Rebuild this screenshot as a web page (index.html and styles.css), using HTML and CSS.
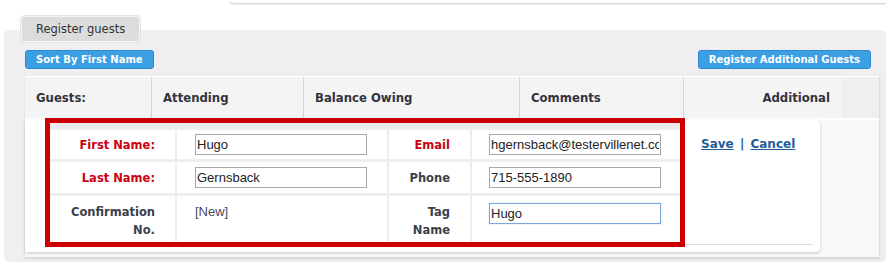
FILE: index.html
```html
<!DOCTYPE html>
<html>

<head>
    <meta name="viewport" content="width=device-width, initial-scale=1">
    <link rel="stylesheet" href="styles.css">
    <title>Register guests</title>
</head>

<body>
    <div class="top-card"></div>

    <div class="tab">Register guests</div>

    <div class="panel">
        <div class="toolbar">
            <button class="btn">Sort By First Name</button>
            <button class="btn">Register Additional Guests</button>
        </div>

        <div class="guest-grid">
            <div class="grid-head">
                <div class="col col-guests">Guests:</div>
                <div class="col col-attending">Attending</div>
                <div class="col col-balance">Balance Owing</div>
                <div class="col col-comments">Comments</div>
                <div class="col col-additional">Additional</div>
            </div>

            <div class="edit-card">
                <div class="edit-box">
                    <div class="form-grid">
                        <div class="lbl req">First Name:</div>
                        <div class="fld"><input class="txt" type="text" value="Hugo"></div>
                        <div class="lbl req">Email</div>
                        <div class="fld alt"><input class="txt" type="text" value="hgernsback@testervillenet.com"></div>

                        <div class="lbl req">Last Name:</div>
                        <div class="fld"><input class="txt" type="text" value="Gernsback"></div>
                        <div class="lbl">Phone</div>
                        <div class="fld alt"><input class="txt" type="text" value="715-555-1890"></div>

                        <div class="lbl top">Confirmation No.</div>
                        <div class="fld top"><span class="new-tag">[New]</span></div>
                        <div class="lbl top">Tag Name</div>
                        <div class="fld alt top"><input class="txt focused" type="text" value="Hugo"></div>
                    </div>
                </div>

                <div class="actions">
                    <a href="#">Save</a> <span class="sep">|</span> <a href="#">Cancel</a>
                </div>
            </div>
        </div>
    </div>
</body>

</html>
```

FILE: styles.css
```css
body {
    margin: 0;
    background: #ffffff;
    font-family: "DejaVu Sans", Verdana, sans-serif;
    color: #333333;
}

.top-card {
    margin-left: 229px;
    width: 657px;
    height: 3px;
    background: #ffffff;
    border-bottom: 1px solid #dadada;
    border-bottom-left-radius: 4px;
    box-shadow: 0 1px 1px rgba(0, 0, 0, 0.08);
}

.tab {
    position: relative;
    z-index: 1;
    width: fit-content;
    margin: 12px 0 -12px 21px;
    padding: 1px 14px 0;
    height: 23px;
    line-height: 23px;
    font-size: 11.5px;
    color: #333333;
    background: #dcdcdc;
    border: 1px solid #f4f4f4;
    border-radius: 4px;
    box-shadow: 0 0 0 1px #e4e4e4;
}

.panel {
    margin-left: 4px;
    width: 882px;
    box-sizing: border-box;
    padding: 20px 6px 5px 21px;
    background: #f0eef0;
    border-radius: 5px;
}

.toolbar {
    display: flex;
    justify-content: space-between;
    margin-right: 9px;
}

.btn {
    height: 19px;
    padding: 0 10px;
    font-family: "DejaVu Sans", Verdana, sans-serif;
    font-size: 10px;
    font-weight: bold;
    color: #ffffff;
    background: #3c9fe3;
    border: 1px solid #2a8bd3;
    border-radius: 3px;
    cursor: pointer;
}

.guest-grid {
    margin-top: 7px;
    background: #f9f8f9;
    border-top: 1px solid #ffffff;
    border-right: 1px solid #dddddd;
    box-shadow: 0 2px 2px rgba(0, 0, 0, 0.1);
    padding-bottom: 5px;
}

.grid-head {
    display: flex;
    height: 41px;
    border-bottom: 2px solid #ffffff;
    background: #f0eef0;
}

.col {
    display: flex;
    align-items: center;
    padding-left: 11px;
    box-sizing: border-box;
    background: #f5f4f5;
    border-right: 1px solid #d4d4d4;
    font-size: 11.7px;
    font-weight: bold;
    color: #333340;
}

.col-guests { width: 127px; }
.col-attending { width: 152px; }
.col-balance { width: 216px; }
.col-comments { width: 164px; }

.col-additional {
    width: 158px;
    justify-content: flex-end;
    padding-right: 12px;
    border-right: none;
}

.edit-card {
    display: flex;
    align-items: flex-start;
    margin-right: 59px;
    background: #ffffff;
    border-radius: 0 4px 4px 0;
    box-shadow: 0 1px 3px rgba(0, 0, 0, 0.2);
    padding-bottom: 5px;
}

.edit-box {
    margin: -2px 0 0 20px;
    padding-top: 7px;
    border: 5px solid #cc0000;
    background: #eeeeee;
}

.form-grid {
    display: grid;
    grid-template-columns: 125px 210px 81px 208px;
    grid-template-rows: 29px 31px 46px;
    gap: 3px 2px;
}

.lbl {
    display: flex;
    align-items: center;
    justify-content: flex-end;
    text-align: right;
    padding-right: 20px;
    background: #ffffff;
    font-size: 11.5px;
    font-weight: bold;
    line-height: 18px;
    color: #3b3f4a;
}

.lbl.req {
    color: #cc0010;
}

.fld {
    display: flex;
    align-items: center;
    padding-left: 18px;
    background: #ffffff;
}

.fld.alt {
    padding-left: 17px;
}

.top {
    align-items: flex-start;
    padding-top: 7px;
}

.txt {
    width: 172px;
    height: 21px;
    box-sizing: border-box;
    padding: 0 1px;
    font-family: "Liberation Sans", Arial, sans-serif;
    font-size: 13px;
    color: #222222;
    border: 1px solid #a5aaa5;
    background: #ffffff;
}

.txt.focused {
    border-color: #7ba7e0;
    box-shadow: 0 0 1px #9cc0ee;
    outline: none;
}

.new-tag {
    font-family: "Liberation Sans", Arial, sans-serif;
    font-size: 13px;
    line-height: 18px;
    color: #4a4a62;
}

.actions {
    flex: 1;
    margin-right: 7px;
    height: 109px;
    padding: 15px 0 0 16px;
    border-bottom: 1px solid #dddddd;
    font-size: 12px;
    font-weight: bold;
    line-height: 18px;
    color: #1f5b98;
}

.actions a {
    color: #1f5b98;
}

.sep {
    margin: 0 2px;
}
```
